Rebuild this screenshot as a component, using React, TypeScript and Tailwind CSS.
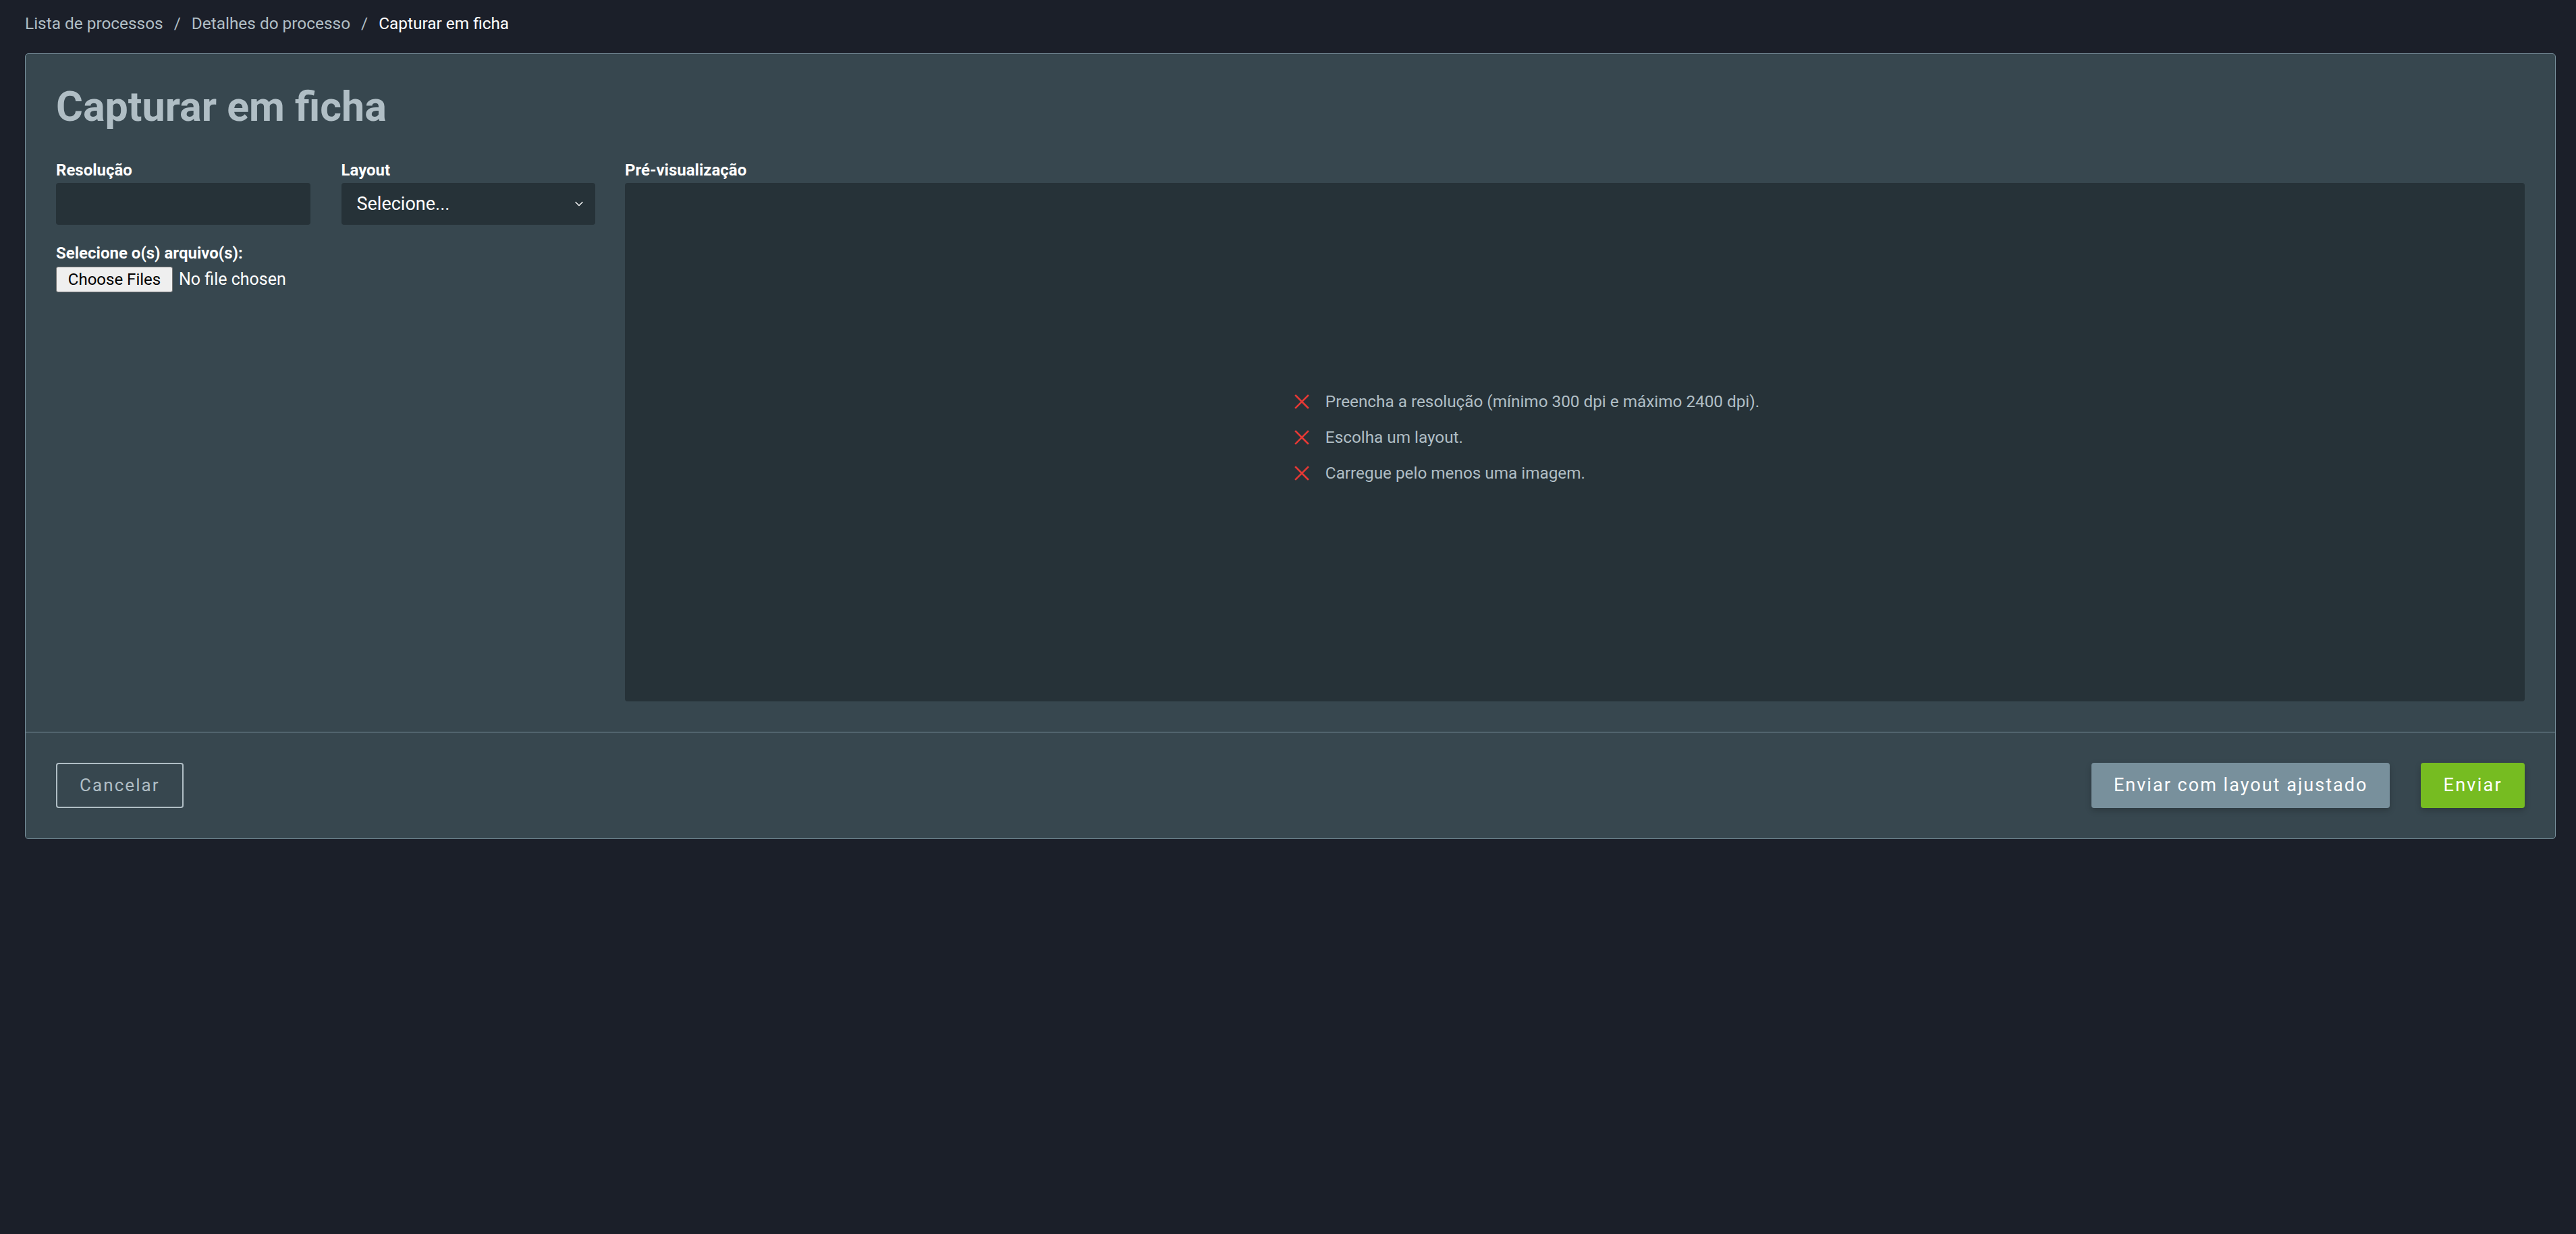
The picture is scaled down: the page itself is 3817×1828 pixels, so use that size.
import { ChevronDown } from "lucide-react";

const errors = [
  "Preencha a resolução (mínimo 300 dpi e máximo 2400 dpi).",
  "Escolha um layout.",
  "Carregue pelo menos uma imagem.",
];

const XMark = () => (
  <svg width="22" height="22" viewBox="0 0 22 22" className="shrink-0">
    <path d="M2 2 L20 20 M20 2 L2 20" stroke="#e53935" strokeWidth="2.6" strokeLinecap="square" fill="none" />
  </svg>
);

const CapturaFicha = () => {
  return (
    <div className="min-h-screen bg-[#1b1f29] font-['Roboto',sans-serif] text-white">
      <div className="pl-[37px] pr-[30px] pt-[16px]">
        {/* Breadcrumb */}
        <nav className="flex items-center text-[24.4px] leading-[37px] mb-[26px]">
          <a className="text-[#b0bec5]">Lista de processos</a>
          <span className="px-[16px] text-[#b0bec5]">/</span>
          <a className="text-[#b0bec5]">Detalhes do processo</a>
          <span className="px-[16px] text-[#b0bec5]">/</span>
          <span className="text-white">Capturar em ficha</span>
        </nav>

        {/* Panel */}
        <div className="bg-[#37474f] border border-[#78909c] rounded-[5px]">
          <div className="px-[45px] pt-[45px] pb-[45px]">
            <h1 className="text-[61px] leading-[66px] font-bold text-[#b0bec5]">Capturar em ficha</h1>

            <div className="flex gap-[44px] mt-[45px]">
              <div className="w-[799px] shrink-0">
                <div className="grid grid-cols-2 gap-x-[46px]">
                  <div>
                    <label className="block text-[24px] leading-[33px] font-bold mb-[2px]">Resolução</label>
                    <input className="w-full h-[62px] bg-[#263238] rounded-[4px] outline-none px-[22px] text-[26px] text-white" />
                  </div>
                  <div>
                    <label className="block text-[24px] leading-[33px] font-bold mb-[2px]">Layout</label>
                    <div className="relative w-full h-[62px] bg-[#263238] rounded-[4px] flex items-center pl-[23px] pr-[14px] text-[27px]">
                      <span className="flex-1">Selecione...</span>
                      <ChevronDown size={20} strokeWidth={1.6} className="text-white" />
                    </div>
                  </div>
                </div>

                <label className="block text-[24px] leading-[33px] font-bold mt-[26px] mb-[3px]">Selecione o(s) arquivo(s):</label>
                <div className="flex items-center gap-[9px]">
                  <button className="h-[38px] w-[173px] bg-[#efefef] border border-[#767676] rounded-[3px] text-[24px] text-black">
                    Choose Files
                  </button>
                  <span className="text-[25px] text-white">No file chosen</span>
                </div>
              </div>

              <div className="flex-1">
                <label className="block text-[24px] leading-[33px] font-bold mb-[2px]">Pré-visualização</label>
                <div className="h-[768px] bg-[#263238] rounded-[4px] flex items-center justify-center">
                  <ul className="flex flex-col gap-[20px] pr-[142px] pb-[15px]">
                    {errors.map((e) => (
                      <li key={e} className="flex items-center gap-[24px] text-[24.3px] leading-[33px] text-[#b0bec5]">
                        <XMark />
                        {e}
                      </li>
                    ))}
                  </ul>
                </div>
              </div>
            </div>
          </div>

          {/* Footer */}
          <div className="border-t border-[#78909c] px-[45px] pt-[45px] pb-[45px] flex items-center justify-between">
            <button className="h-[67px] px-[33px] border-2 border-[#b0bec5] rounded-[4px] text-[26px] tracking-[0.08em] text-[#b0bec5]">
              Cancelar
            </button>
            <div className="flex gap-[46px]">
              <button className="h-[67px] px-[33px] bg-[#78909c] rounded-[4px] text-[27px] tracking-[0.075em] text-white shadow-[0_4px_10px_rgba(0,0,0,0.2)]">
                Enviar com layout ajustado
              </button>
              <button className="h-[67px] px-[33px] bg-[#76bc21] rounded-[4px] text-[27px] tracking-[0.085em] text-white shadow-[0_4px_10px_rgba(0,0,0,0.2)]">
                Enviar
              </button>
            </div>
          </div>
        </div>
      </div>
    </div>
  );
};

export default CapturaFicha;
